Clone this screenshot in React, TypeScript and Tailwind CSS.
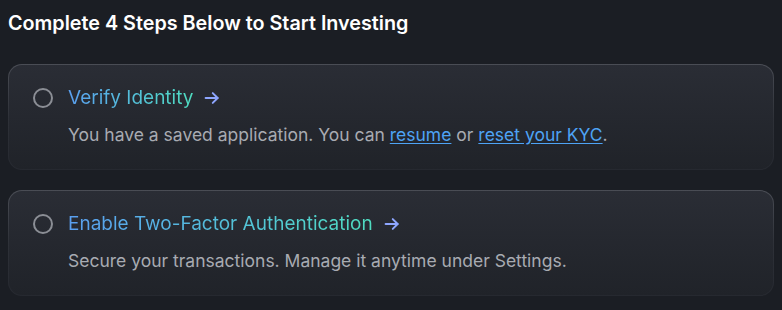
import React from "react";

function Circle() {
  return <div className="w-5 h-5 rounded-full border-2 border-[#8b8e95] shrink-0" />;
}

function Arrow() {
  return (
    <svg width="18" height="18" viewBox="0 0 24 24" fill="none" stroke="#8ea6ff" strokeWidth="2.6" strokeLinecap="round" strokeLinejoin="round" className="ml-[10px]">
      <path d="M3.5 12h16" />
      <path d="M13 5.5l6.5 6.5-6.5 6.5" />
    </svg>
  );
}

function Card({ title, children }: { title: string; children: React.ReactNode }) {
  return (
    <div className="rounded-[14px] p-px bg-gradient-to-b from-[#4a4d55] via-[#2e3138] to-[#262930]">
      <div className="rounded-[13px] bg-gradient-to-b from-[#2a2d35] to-[#202329] h-[104px] pl-6 pr-6 pt-[19px]">
        <div className="flex items-center h-[28px]">
          <Circle />
          <span className="ml-[15px] text-[19px] bg-gradient-to-r from-[#5a9ff0] to-[#4fdcc0] bg-clip-text text-transparent">
            {title}
          </span>
          <Arrow />
        </div>
        <div className="ml-[35px] mt-[10px] text-[17.5px] text-[#a8abb2] leading-[26px]">{children}</div>
      </div>
    </div>
  );
}

export default function App() {
  return (
    <div className="w-[782px] h-[310px] bg-[#1b1e24] px-2 pt-[9px] overflow-hidden" style={{ fontFamily: "Inter, 'Noto Sans', sans-serif" }}>
      <h1 className="text-[19.75px] font-semibold text-white leading-7">Complete 4 Steps Below to Start Investing</h1>
      <div className="mt-[27px] flex flex-col gap-5">
        <Card title="Verify Identity">
          You have a saved application. You can{" "}
          <a className="text-[#4ea3f5] underline underline-offset-2">resume</a> or{" "}
          <a className="text-[#4ea3f5] underline underline-offset-2">reset your KYC</a>.
        </Card>
        <Card title="Enable Two-Factor Authentication">
          Secure your transactions. Manage it anytime under Settings.
        </Card>
      </div>
    </div>
  );
}
